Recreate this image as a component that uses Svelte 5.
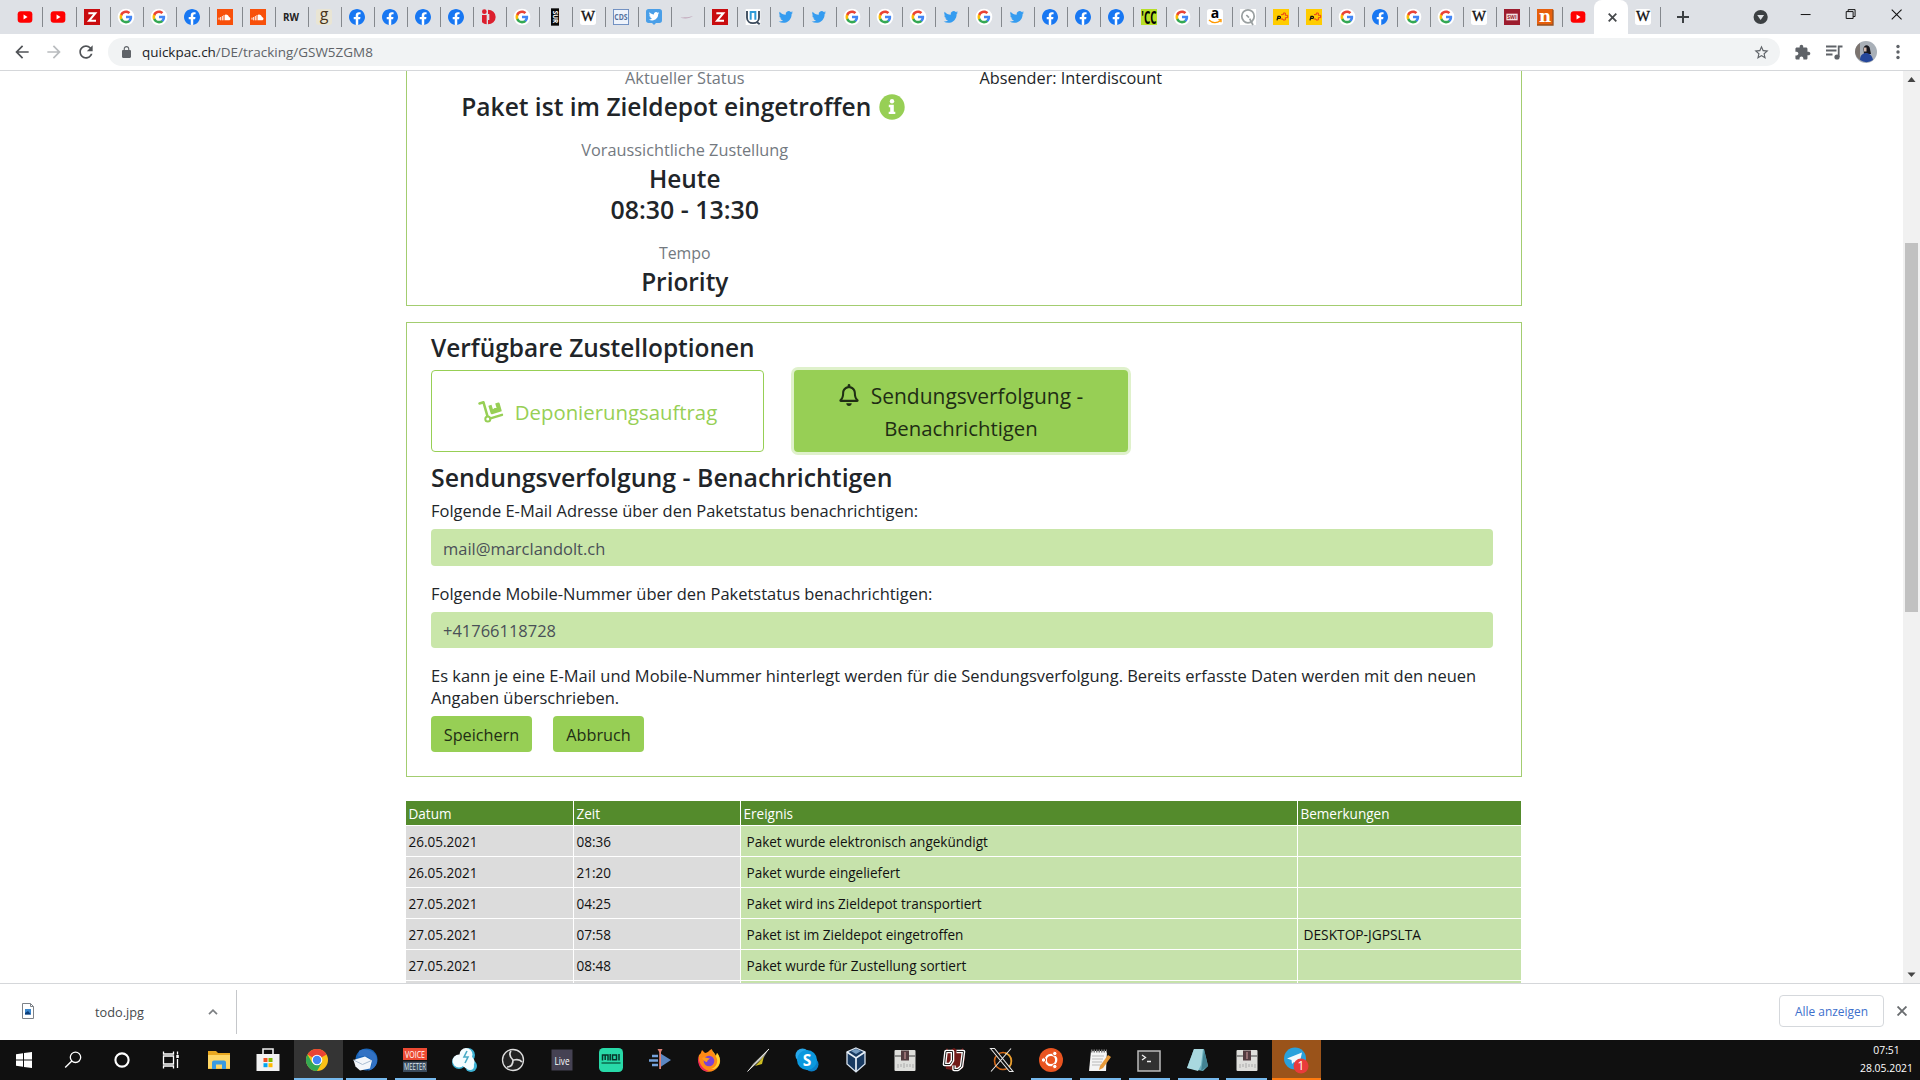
<script>
  const tabs = 'yt yt Z G G f sc sc RW g f f f f iD G mus W CDS twb line Z U tw tw G G G tw G tw f f f CC G a Q post post G f G G W SWI n yt'.split(' ');
  const tasks = 'win search cortana view explorer store chrome bird voice cloud obs live midi arrow firefox quill skype vbox fader dj x ubuntu notepad term notes fader telegram'.split(' ');
  const running = [7, 8, 21, 22, 23, 24, 25];
  const events = [
    ['26.05.2021', '08:36', 'Paket wurde elektronisch angekündigt', ''],
    ['26.05.2021', '21:20', 'Paket wurde eingeliefert', ''],
    ['27.05.2021', '04:25', 'Paket wird ins Zieldepot transportiert', ''],
    ['27.05.2021', '07:58', 'Paket ist im Zieldepot eingetroffen', 'DESKTOP-JGPSLTA'],
    ['27.05.2021', '08:48', 'Paket wurde für Zustellung sortiert', ''],
    ['', '', '', '']
  ];
  const bird = 'M23.953 4.57a10 10 0 01-2.825.775 4.958 4.958 0 002.163-2.723c-.951.555-2.005.959-3.127 1.184a4.92 4.92 0 00-8.384 4.482C7.69 8.095 4.067 6.13 1.64 3.162a4.822 4.822 0 00-.666 2.475c0 1.71.87 3.213 2.188 4.096a4.904 4.904 0 01-2.228-.616v.06a4.923 4.923 0 003.946 4.827 4.996 4.996 0 01-2.212.085 4.936 4.936 0 004.604 3.417 9.867 9.867 0 01-6.102 2.105c-.39 0-.779-.023-1.17-.067a13.995 13.995 0 007.557 2.209c9.053 0 13.998-7.496 13.998-13.985 0-.21 0-.42-.015-.63A9.935 9.935 0 0024 4.59z';
</script>

{#snippet favicon(k)}
  <svg class="fav" viewBox="0 0 24 24">
    {#if k === 'yt'}
      <rect x="1" y="3.5" width="22" height="17" rx="4.5" fill="#f00" /><path d="M9.8 8.3v7.4l6-3.7z" fill="#fff" />
    {:else if k === 'G'}
      <circle cx="12" cy="12" r="12.5" fill="#fff" />
      <g transform="translate(1.4 1.4) scale(.88)">
        <path fill="#4285F4" d="M22.56 12.25c0-.78-.07-1.53-.2-2.25H12v4.26h5.92c-.26 1.37-1.04 2.53-2.21 3.31v2.77h3.57c2.08-1.92 3.28-4.74 3.28-8.09z" />
        <path fill="#34A853" d="M12 23c2.97 0 5.46-.98 7.28-2.66l-3.57-2.77c-.98.66-2.23 1.06-3.71 1.06-2.86 0-5.29-1.93-6.16-4.53H2.18v2.84C3.99 20.53 7.7 23 12 23z" />
        <path fill="#FBBC05" d="M5.84 14.09c-.22-.66-.35-1.36-.35-2.09s.13-1.43.35-2.09V7.07H2.18C1.43 8.55 1 10.22 1 12s.43 3.45 1.18 4.93l2.85-2.22.81-.62z" />
        <path fill="#EA4335" d="M12 5.38c1.62 0 3.06.56 4.21 1.64l3.15-3.15C17.45 2.09 14.97 1 12 1 7.7 1 3.99 3.47 2.18 7.07l3.66 2.84c.87-2.6 3.3-4.53 6.16-4.53z" />
      </g>
    {:else if k === 'f'}
      <circle cx="12" cy="12" r="11.5" fill="#fff" />
      <path fill="#1877f2" d="M24 12.073c0-6.627-5.373-12-12-12s-12 5.373-12 12c0 5.99 4.388 10.954 10.125 11.854v-8.385H7.078v-3.47h3.047V9.43c0-3.007 1.792-4.669 4.533-4.669 1.312 0 2.686.235 2.686.235v2.953H15.83c-1.491 0-1.956.925-1.956 1.874v2.25h3.328l-.532 3.47h-2.796v8.385C19.612 23.027 24 18.062 24 12.073z" />
    {:else if k === 'tw'}
      <g transform="translate(1 1.2) scale(.9)"><path fill="#359cf0" d={bird} /></g>
    {:else if k === 'twb'}
      <path d="M4 0h16a4 4 0 0 1 4 4v13a4 4 0 0 1-4 4h-5l-3 3-3-3H4a4 4 0 0 1-4-4V4a4 4 0 0 1 4-4z" fill="#4a9fe8" /><g transform="translate(4.3 3) scale(.65)"><path fill="#fff" d={bird} /></g>
    {:else if k === 'Z'}
      <rect width="24" height="24" fill="#c90c0f" /><path d="M6.5 6.2h10.500L7.500 17.800h10.500" fill="none" stroke="#fff" stroke-width="3" />
    {:else if k === 'sc'}
      <rect width="24" height="24" fill="#f8500a" /><path d="M3 13v3M5.500 12v5M8 10.500v6.500M10.500 9v8" stroke="#fff" stroke-width="1.400" /><path d="M12 17V8.500a4.500 4.500 0 0 1 6 3.600 2.600 2.600 0 0 1 .8 4.900z" fill="#fff" />
    {:else if k === 'RW'}
      <text x="12" y="17.500" font-size="16" font-weight="700" textLength="24" lengthAdjust="spacingAndGlyphs" text-anchor="middle" fill="#222">RW</text>
    {:else if k === 'g'}
      <rect width="24" height="24" rx="4" fill="#e9e5d4" /><text x="12" y="17" font-size="24" text-anchor="middle" fill="#49351c">g</text>
    {:else if k === 'iD'}
      <circle cx="5" cy="4" r="3.500" fill="#dc1f2e" /><path d="M1.500 9h7v14a11 11 0 0 1-7-3z" fill="#dc1f2e" /><path d="M10.500 1a11.500 11 0 0 1 0 22v-6.500h2v-9h-2z" fill="#dc1f2e" />
    {:else if k === 'mus'}
      <rect x="6" y="-1" width="12" height="26" fill="#080808" /><text transform="translate(9 12) rotate(90)" font-size="9.500" font-weight="700" text-anchor="middle" fill="#fff">SUR</text>
    {:else if k === 'W'}
      <rect width="24" height="24" rx="4" fill="#fff" /><text class="serif" x="12" y="18.500" font-size="21" textLength="21" lengthAdjust="spacingAndGlyphs" text-anchor="middle" fill="#111" stroke="#111" stroke-width=".5">W</text>
    {:else if k === 'CDS'}
      <rect x=".7" y=".7" width="22.600" height="22.600" fill="#eef3fb" stroke="#6b8cc0" stroke-width="1.400" /><text x="12" y="17" font-size="13" font-weight="700" textLength="20" lengthAdjust="spacingAndGlyphs" text-anchor="middle" fill="#55719f">CDS</text>
    {:else if k === 'line'}
      <path d="M2 13c6-1 10 .2 19-2.500-5 4-12 4.500-19 2.500z" fill="#c3aabd" />
    {:else if k === 'U'}
      <rect x="1" width="22" height="24" fill="#fff" /><path d="M3 3v10c0 11 18 11 18 0V3" fill="none" stroke="#3b4a5c" stroke-width="2.800" /><path d="M8.500 16V4.500h7V16" fill="none" stroke="#2f9bd8" stroke-width="3" /><path d="M17 19l5 4" stroke="#3b4a5c" stroke-width="3" />
    {:else if k === 'CC'}
      <rect width="24" height="24" fill="#b7df26" /><text x="12" y="22" font-size="27" font-weight="700" textLength="23" lengthAdjust="spacingAndGlyphs" text-anchor="middle">'CC</text>
    {:else if k === 'a'}
      <rect width="24" height="24" rx="4" fill="#fff" /><text x="12" y="14" font-size="21" font-weight="700" text-anchor="middle">a</text><path d="M3 16.500c5 5 12 5 17 1M17 16h4v4" fill="none" stroke="#f90" stroke-width="2" />
    {:else if k === 'Q'}
      <rect width="24" height="24" fill="#fff" /><ellipse cx="12" cy="11" rx="9.300" ry="9.800" fill="none" stroke="#9aa0a1" stroke-width="2.600" /><path d="M9.500 9l4 4M14.500 14.500l5 9.500" stroke="#9aa0a1" stroke-width="2.600" />
    {:else if k === 'post'}
      <rect width="24" height="24" fill="#fc0" /><path d="M6 17l1.500-6h2.500a1.600 1.600 0 0 1-.6 3.200H7.500" fill="none" stroke="#111" stroke-width="1.800" /><path d="M12 8.500h3.500V6h3v3.500H22v3.500h-3.500v3.500H15V15h-3.500" fill="none" stroke="#e8401c" stroke-width="1.500" />
    {:else if k === 'SWI'}
      <rect width="24" height="24" fill="#9d1c2e" /><rect x="3.500" y="7" width="17" height="10" fill="#f2dfe1" /><text x="12" y="15.500" font-size="9" font-weight="700" textLength="14" lengthAdjust="spacingAndGlyphs" text-anchor="middle" fill="#9d1c2e">SWI</text>
    {:else if k === 'n'}
      <rect width="24" height="24" fill="#e65f0c" /><path d="M0 24h24V1" fill="none" stroke="#99501e" stroke-width="2" /><text class="slab" x="12" y="19" font-size="25" font-weight="700" text-anchor="middle" fill="#fff">n</text>
    {/if}
  </svg>
{/snippet}

{#snippet task(k)}
  <svg class="ticon" viewBox="0 0 28 28">
    {#if k === 'win'}
      <path d="M6 8.200l7-1v6.300H6zM14 7.100l8-1.100v7.500h-8zM6 14.500h7v6.300l-7-1zM14 14.500h8V22l-8-1.100z" fill="#fff" />
    {:else if k === 'search'}
      <circle cx="16.500" cy="11.300" r="5.200" fill="none" stroke="#fff" stroke-width="1.300" /><path d="M12.800 15l-6.600 6.600" stroke="#fff" stroke-width="1.400" />
    {:else if k === 'cortana'}
      <circle cx="14" cy="14" r="6.600" fill="none" stroke="#fff" stroke-width="2.100" />
    {:else if k === 'view'}
      <path d="M6.500 10h10v8h-10zM6.500 5.500V8h10V5.500M6.500 22.500V20h10v2.500M20.500 5.500v3M20.500 13v9" fill="none" stroke="#fff" stroke-width="1.300" /><rect x="19.300" y="9" width="2.500" height="3" fill="#fff" />
    {:else if k === 'explorer'}
      <path d="M3 5h8l2 2h12v16H3z" fill="#e9a820" /><path d="M3 9h22v13.500H3z" fill="#ffd766" /><path d="M7 23v-6.500a2 2 0 0 1 2-2h10a2 2 0 0 1 2 2V23h-4v-4.500h-6V23z" fill="#3a9be0" />
    {:else if k === 'store'}
      <path d="M9 8V3h10v5" fill="none" stroke="#eee" stroke-width="1.600" /><path d="M2.500 8h23v17h-23z" fill="#f2f2f2" /><path d="M9.500 12h4v4h-4z" fill="#f25022" /><path d="M14.500 12h4v4h-4z" fill="#7fba00" /><path d="M9.500 17.200h4v4h-4z" fill="#00a4ef" /><path d="M14.500 17.200h4v4h-4z" fill="#ffb900" />
    {:else if k === 'chrome'}
      <circle cx="14" cy="14" r="11" fill="#fbc116" /><path d="M14 14L4.470 8.500A11 11 0 0 1 23.530 8.500z" fill="#ea4335" /><path d="M4.470 8.500A11 11 0 0 0 14 25l4.800-8.200H9.200z" fill="#34a853" /><circle cx="14" cy="14" r="5.300" fill="#fff" /><circle cx="14" cy="14" r="4.200" fill="#4285f4" />
    {:else if k === 'bird'}
      <circle cx="14.500" cy="13.500" r="11" fill="#1763b6" /><path d="M7 5c8-4 18 1 18 9 0 6-4 10-9 10.500 4-3 5-7 3-11-3-4-8-4-13-3z" fill="#3272c4" /><path d="M1.500 14l11.500-3.500 7 4-2 8-10 2-4.500-4z" fill="#f3f6fa" /><path d="M1.500 14l9 4.500 9-4" fill="none" stroke="#a9bdd2" />
    {:else if k === 'voice'}
      <path d="M2 2h24v12H2z" fill="#ed4a33" /><path d="M2 15.500h24V26H2z" fill="#3a4a5c" /><text x="14" y="11.500" font-size="9.500" textLength="20" lengthAdjust="spacingAndGlyphs" text-anchor="middle" fill="#fff">VOICE</text><text x="14" y="24" font-size="9" textLength="22" lengthAdjust="spacingAndGlyphs" text-anchor="middle" fill="#dfe6ed">MEETER</text>
    {:else if k === 'cloud'}
      <g fill="#3db2d4"><circle cx="18" cy="9" r="7" /><circle cx="9" cy="16" r="7" /><circle cx="21" cy="20" r="6" /></g><g fill="#f4fcff"><circle cx="16" cy="8.500" r="6.500" /><circle cx="9" cy="15" r="6.500" /><circle cx="18" cy="16" r="6.500" /><circle cx="20" cy="20" r="4" /></g><path d="M17 5l-3 6h4l-3 6" fill="none" stroke="#47aac6" stroke-width="1.600" />
    {:else if k === 'obs'}
      <circle cx="14" cy="14" r="10.500" fill="#222" stroke="#ddd" stroke-width="1.300" /><path d="M12 5c-3 4 0 7 2 9M23 16c-3-4-6-2-9-2M8 21c5 0 6-3 6-7" fill="none" stroke="#ddd" stroke-width="1.700" />
    {:else if k === 'live'}
      <path d="M3.500 3.500h21v21h-21z" fill="#454253" /><text x="14" y="18.500" font-size="11" textLength="15" lengthAdjust="spacingAndGlyphs" text-anchor="middle" fill="#fff">Live</text>
    {:else if k === 'midi'}
      <rect x="2" y="2" width="24" height="24" rx="4.500" fill="#28d9a8" /><path d="M5.500 14.500V9h5.500v5.500M8.200 9v5M13.200 8v6.500M15.500 9h4v4.700h-4zM22 8v6.500" fill="none" stroke="#07352a" stroke-width="1.500" /><path d="M4.500 17h19" stroke="#128563" stroke-width="2" />
    {:else if k === 'arrow'}
      <path d="M14.500 7.500L25 14l-10.500 7z" fill="#5c87c2" /><path d="M6 10h6M3 14.500h9M6 19h6" stroke="#75a2dc" stroke-width="2.300" /><path d="M11.500 3h5L15 6v17h-1.800V6z" fill="#dd8177" />
    {:else if k === 'firefox'}
      <path d="M4 9c2-1 2-3 3-5l3 3c3 0 4-3 7-4 0 3 2 3 4 7l1-3c4 5 4 10 1 14-5 7-15 6-18-1-2-4-2-8-1-11z" fill="#ff8a16" /><path d="M17 3c0 4 3 4 5 10 1 5-2 9-6 10 8 1 12-9 6-16l-1 3c-2-4-4-5-4-7z" fill="#ffd42f" /><path d="M3 10c1 5 3 13 11 15-6 2-12-4-11-15z" fill="#f1275a" /><circle cx="14" cy="15" r="5.300" fill="#7b42d5" /><path d="M7 12c3-2 5 1 8 0-1 2-3 2-3 4-2 0-4-2-5-4z" fill="#ff9b20" />
    {:else if k === 'quill'}
      <path d="M4 25l5-7L25 2.500 20 11l-9 8z" fill="#a5a59a" /><path d="M11 20l4-4 5-6-2 8z" fill="#cdbd22" /><path d="M3.500 25.500L25 3" stroke="#eee" />
    {:else if k === 'skype'}
      <circle cx="9.500" cy="9.500" r="7" fill="#28a8ea" /><circle cx="18.500" cy="18.500" r="7" fill="#0a7fc8" /><circle cx="14" cy="14" r="10" fill="#0b98de" /><text x="14" y="19.500" font-size="15.500" font-weight="700" text-anchor="middle" fill="#fff">S</text>
    {:else if k === 'vbox'}
      <path d="M14 2l9 4v12l-9 8-9-8V6z" fill="#183a61" stroke="#d9e4f0" stroke-width="1.300" /><path d="M5 6l9 6 9-6M14 12v13" fill="none" stroke="#e9f1f8" stroke-width="1.700" /><path d="M9 5l5-2 5 2-5 3z" fill="#779dc1" />
    {:else if k === 'fader'}
      <rect x="3.500" y="4" width="21" height="21" rx="1" fill="#dededb" /><path d="M3.500 10h21" stroke="#777" stroke-width="1.500" /><rect x="10" y="4.500" width="8" height="10" fill="#523b40" /><path d="M13 6h2v7h-2z" fill="#926c70" /><path d="M7 18v4M10 18v3M13 17v5M16 18v3M19 18v3M22 18v4" stroke="#aaa" />
    {:else if k === 'dj'}
      <path d="M4 7l3-5 2 3 5-3 5 3 4-3 2 9-2 11-6 3-11-2z" fill="#711a18" /><g fill="none" stroke-linejoin="round"><path d="M6 5.500h6.500v9L10 18.500H4.500zM16.500 5.500h7l-2 15-3.500 3h-4v-4" stroke="#fff" stroke-width="3.600" /><path d="M6 5.500h6.500v9L10 18.500H4.500zM16.500 5.500h7l-2 15-3.500 3h-4v-4" stroke="#222" stroke-width="1" /></g>
    {:else if k === 'x'}
      <circle cx="15" cy="15" r="8.500" fill="none" stroke="#d36818" stroke-width="1.600" /><path d="M17 7a8.500 8.500 0 0 1 4 14" fill="none" stroke="#e3a332" stroke-width="1.500" /><path d="M2.500 2.500l19 23h3.500L6.500 2.500zM23 2.500L3 25.500" fill="#111" stroke="#e6e6e6" stroke-width="1.100" />
    {:else if k === 'ubuntu'}
      <circle cx="14" cy="14" r="12" fill="#e95420" /><circle cx="14" cy="14" r="5.200" fill="none" stroke="#fff" stroke-width="2.300" /><g fill="#fff" stroke="#e95420"><circle cx="6.500" cy="14" r="2.200" /><circle cx="17.800" cy="7.500" r="2.200" /><circle cx="17.800" cy="20.500" r="2.200" /></g>
    {:else if k === 'notepad'}
      <path d="M5 5h16l-1 20H3z" fill="#f4f4f4" /><path d="M5 5h16" stroke="#777" stroke-width="3" stroke-dasharray="1.500 1" /><path d="M6 10h12M6 13h11M6 16h10M6 19h9" stroke="#b9b9b9" /><path d="M22 9l3 2-8 11-4 2 1-4z" fill="#e79a39" />
    {:else if k === 'term'}
      <rect x="3" y="5" width="22" height="20" fill="#303030" stroke="#bbb" stroke-width="1.500" /><path d="M7 9l3.500 2.500L7 14M12 15.500h4" fill="none" stroke="#eee" stroke-width="1.300" />
    {:else if k === 'notes'}
      <path d="M10 3h10l4 17-5 5-16-3z" fill="#68aebc" /><path d="M10 3h9l-2 16-3 6-11-3z" fill="#a9d8df" /><path d="M20 4l4 16-7 5 1-6z" fill="#438393" />
    {:else if k === 'telegram'}
      <circle cx="13" cy="12.500" r="11" fill="#2aa1dc" /><path d="M5 12.500L20 6.500 17 20l-5-4-2 2-.5-4z" fill="#f3f9fd" /><circle cx="19" cy="20" r="7.500" fill="#e93b3b" /><text x="19" y="24.300" font-size="12" text-anchor="middle" fill="#fff">1</text>
    {/if}
  </svg>
{/snippet}

<div class="screen">
  <div class="tabstrip">
    {#each tabs as k, i}
      <div class="tab" class:wide={i === 1 || i === 2} class:last={i === tabs.length - 1}>{@render favicon(k)}</div>
    {/each}
    <div class="tab active"><svg class="c9" viewBox="0 0 9 9"><path d="M.7.700l7.600 7.600M8.300.700L.7 8.300" stroke="#46494c" stroke-width="1.800" /></svg></div>
    <div class="tab">{@render favicon('W')}</div>
    <div class="newtab"><svg viewBox="0 0 14 14"><path d="M7 1v12M1 7h12" stroke="#3c4043" stroke-width="2" /></svg></div>
    <div class="wctl">
      <svg viewBox="0 0 46 34"><circle cx="23" cy="17" r="7.200" fill="#3c4043" /><path d="M19.500 15h7L23 20z" fill="#dee1e6" /></svg>
      <svg viewBox="0 0 46 34"><path d="M18 14.500h10" stroke="#111" /></svg>
      <svg viewBox="0 0 46 34"><path d="M18.500 11.500h7v7h-7zM20.500 11.500v-2h7v7h-2" fill="none" stroke="#111" /></svg>
      <svg viewBox="0 0 46 34"><path d="M18 9.500l10 10M28 9.500l-10 10" stroke="#111" stroke-width="1.100" /></svg>
    </div>
  </div>

  <div class="toolbar">
    <div class="slot"><svg viewBox="0 0 24 24" fill="#505357"><path d="M20 11H7.830l5.590-5.590L12 4l-8 8 8 8 1.410-1.410L7.830 13H20v-2z" /></svg></div>
    <div class="slot"><svg viewBox="0 0 24 24" fill="#b9bcbf"><path d="M4 11h12.170l-5.590-5.590L12 4l8 8-8 8-1.410-1.410L16.170 13H4v-2z" /></svg></div>
    <div class="slot"><svg viewBox="0 0 24 24" fill="#505357"><path d="M17.650 6.350C16.200 4.900 14.210 4 12 4c-4.420 0-7.990 3.580-7.990 8s3.570 8 7.990 8c3.730 0 6.840-2.550 7.730-6h-2.080c-.82 2.330-3.040 4-5.650 4-3.310 0-6-2.690-6-6s2.690-6 6-6c1.660 0 3.140.69 4.220 1.780L13 11h7V4l-2.350 2.350z" /></svg></div>
    <div class="omni">
      <svg class="lock" viewBox="4 1 16 21" fill="#5f6368"><path d="M18 8h-1V6c0-2.760-2.240-5-5-5S7 3.240 7 6v2H6c-1.100 0-2 .9-2 2v10c0 1.100.9 2 2 2h12c1.100 0 2-.9 2-2V10c0-1.100-.9-2-2-2zm-3 0H9V6c0-1.700 1.300-3 3-3s3 1.300 3 3z" /></svg>
      <span class="url"><b>quickpac.ch</b>/DE/tracking/GSW5ZGM8</span>
      <svg class="star" viewBox="0 0 24 24" fill="#5f6368"><path d="M22 9.240l-7.190-.62L12 2 9.190 8.630 2 9.240l5.460 4.730L5.820 21 12 17.270 18.180 21l-1.630-7.030L22 9.240zM12 15.400l-3.760 2.270 1-4.280-3.320-2.880 4.380-.38L12 6.100l1.710 4.040 4.380.38-3.320 2.880 1 4.280L12 15.400z" /></svg>
    </div>
    <div class="slot"><svg class="puz" viewBox="0 0 24 24" fill="#5f6368"><path d="M20.500 11H19V7c0-1.100-.9-2-2-2h-4V3.500C13 2.120 11.880 1 10.500 1S8 2.120 8 3.500V5H4c-1.100 0-1.990.9-1.990 2v3.800H3.500c1.490 0 2.700 1.210 2.700 2.700s-1.210 2.700-2.700 2.700H2V20c0 1.100.9 2 2 2h3.800v-1.500c0-1.490 1.210-2.700 2.700-2.700 1.490 0 2.700 1.210 2.700 2.700V22H17c1.100 0 2-.9 2-2v-4h1.500c1.380 0 2.500-1.120 2.500-2.500S21.880 11 20.500 11z" /></svg></div>
    <div class="slot"><svg viewBox="0 0 20 20"><path d="M2 4.500h10.500M2 8.500h10.500M2 12.500h6.500M14.700 15V4.500H18.500" fill="none" stroke="#5f6368" stroke-width="1.800" /><circle cx="13" cy="15" r="2.600" fill="#5f6368" /></svg></div>
    <div class="slot"><svg class="avatar" viewBox="0 0 22 22"><circle cx="11" cy="11" r="11" fill="#a9b0b8" /><path d="M0 11a11 11 0 0 1 5-9v17a11 11 0 0 1-5-8z" fill="#7c746f" /><path d="M8.500 8c0-5 6-5 6.500 0l1 5H9z" fill="#17181f" /><path d="M5 19c0-5 3-7 6-7s6 2 7 7a11 11 0 0 1-13 0z" fill="#25479a" /><path d="M9 6.500h2.500v4H9z" fill="#d4b9ae" /></svg></div>
    <div class="slot"><svg viewBox="0 0 20 20" fill="#5f6368"><circle cx="10" cy="4.500" r="1.700" /><circle cx="10" cy="10" r="1.700" /><circle cx="10" cy="15.500" r="1.700" /></svg></div>
  </div>

  <div class="viewport">
    <main>
      <section class="card status">
        <div class="col">
          <div class="lbl">Aktueller Status</div>
          <div class="val headline"><span>Paket ist im Zieldepot eingetroffen</span><svg class="info" viewBox="0 0 26 26"><circle cx="13" cy="13" r="12.700" fill="#97cf55" /><circle cx="13" cy="7.300" r="2.200" fill="#fff" /><path d="M9.800 10.800h5v6.900h1.500v2.400H9.700v-2.400h1.500v-4.500H9.800z" fill="#fff" /></svg></div>
          <div class="lbl">Voraussichtliche Zustellung</div>
          <div class="val">Heute<br /><span class="hours">08:30 - 13:30</span></div>
          <div class="lbl tempo">Tempo</div>
          <div class="val">Priority</div>
        </div>
        <div class="sender">Absender: Interdiscount</div>
      </section>

      <section class="card options">
        <h3>Verfügbare Zustelloptionen</h3>
        <div class="choices">
          <button class="choice outline">
            <svg class="dolly" viewBox="0 0 26 22"><path d="M1.500 2.500l4-1.200 4 14" fill="none" stroke="#97cf55" stroke-width="2.500" stroke-linecap="round" stroke-linejoin="round" /><circle cx="9.800" cy="18" r="2.500" fill="#fff" stroke="#97cf55" stroke-width="2" /><path d="M12.500 17.300l11.500-3.500" stroke="#97cf55" stroke-width="2.400" stroke-linecap="round" /><path d="M10.500 4.700l3-1 1.400 4.500 1.700-1.300 2 .2-1.400-4.600 3-1c.7-.2 1.200.1 1.400.7l2 7c.2.700-.1 1.200-.7 1.400l-8.800 2.600c-.7.200-1.200-.1-1.400-.7l-2-6.400c-.2-.7-.3-1.200-.2-1.400z" fill="#97cf55" /></svg>
            <span class="depo">Deponierungsauftrag</span>
          </button>
          <button class="choice solid">
            <span class="first"><svg class="bell" viewBox="0 0 448 512" fill="#1f2e14"><path d="M224 512c35.320 0 63.970-28.650 63.970-64H160.030c0 35.350 28.650 64 63.970 64zm215.390-149.710c-19.320-20.760-55.470-51.990-55.470-154.290 0-77.700-54.480-139.900-127.940-155.160V32c0-17.670-14.320-32-31.980-32s-31.980 14.330-31.980 32v20.840C118.560 68.100 64.080 130.300 64.080 208c0 102.300-36.150 133.530-55.470 154.290-6 6.450-8.660 14.160-8.610 21.710.11 16.400 12.980 32 32.100 32h383.800c19.120 0 32-15.600 32.100-32 .05-7.550-2.610-15.270-8.610-21.710zM67.530 368c21.220-27.970 44.420-74.330 44.530-159.420 0-.2-.06-.38-.06-.58 0-61.860 50.140-112 112-112s112 50.140 112 112c0 .2-.06.38-.06.58.11 85.100 23.310 131.460 44.530 159.420H67.530z" /></svg><span class="send">Sendungsverfolgung -</span></span>
            <span>Benachrichtigen</span>
          </button>
        </div>
        <h3 class="second">Sendungsverfolgung - Benachrichtigen</h3>
        <label class="mail-l" for="mail">Folgende E-Mail Adresse über den Paketstatus benachrichtigen:</label>
        <div class="field mail" id="mail">mail@marclandolt.ch</div>
        <label class="tel-l" for="tel">Folgende Mobile-Nummer über den Paketstatus benachrichtigen:</label>
        <div class="field" id="tel">+41766118728</div>
        <p>Es kann je eine E-Mail und Mobile-Nummer hinterlegt werden für die Sendungsverfolgung. Bereits erfasste Daten werden mit den neuen<br />Angaben überschrieben.</p>
        <div class="actions"><button class="save">Speichern</button><button class="cancel">Abbruch</button></div>
      </section>

      <div class="grid">
        <div class="row head"><span>Datum</span><span>Zeit</span><span>Ereignis</span><span>Bemerkungen</span></div>
        {#each events as e}
          <div class="row"><span>{e[0]}</span><span>{e[1]}</span><span class="ev">{e[2]}</span><span class="ev rem">{e[3]}</span></div>
        {/each}
      </div>
    </main>
    <div class="scrollbar">
      <svg viewBox="0 0 17 17"><path d="M4.500 11h8l-4-5z" fill="#444" /></svg>
      <div class="thumb"></div>
      <svg class="down" viewBox="0 0 17 17"><path d="M4.500 6.500h8l-4 4.500z" fill="#444" /></svg>
    </div>
  </div>

  <div class="shelf">
    <div class="dl">
      <svg class="file" viewBox="0 0 12 16"><path d="M.5.500h8l3 3v12H.5z" fill="#fff" stroke="#7d8288" /><path d="M8.500.500v3h3" fill="none" stroke="#7d8288" /><path d="M3 6h6v5.500H3z" fill="#3a86cc" /><path d="M3 11.500V10l3-2 3 3.500z" fill="#0c3d78" /></svg>
      <span class="name">todo.jpg</span>
      <svg class="chev" viewBox="0 0 10 6"><path d="M1 5.200l4-4 4 4" fill="none" stroke="#7c7f82" stroke-width="1.700" /></svg>
    </div>
    <button class="all">Alle anzeigen</button>
    <svg class="c9 close" viewBox="0 0 9 9"><path d="M.5.500l8 8M8.500.500l-8 8" stroke="#6a6d70" stroke-width="1.700" /></svg>
  </div>

  <div class="taskbar">
    {#each tasks as k, i}
      <div class="task" class:run={running.includes(i)} class:current={i === 6} class:alert={i === 26}>{@render task(k)}</div>
    {/each}
    <div class="clock">07:51<br />28.05.2021</div>
  </div>
</div>

<style>
  :global(body) { margin: 0; overflow: hidden; }
  .screen { width: 1920px; height: 1080px; display: flex; flex-direction: column; background: #fff; color: #212529; font-family: "Open Sans", "Noto Sans", sans-serif; font-size: 16.480px; line-height: 22px; overflow: hidden; }
  .screen * { box-sizing: border-box; }
  svg { display: block; flex: none; }
  .serif { font-family: "Liberation Serif", serif; }
  .slab { font-family: "DejaVu Serif", serif; }
  button { font: inherit; border: 0; padding: 0; white-space: nowrap; }

  .tabstrip { height: 34px; flex: none; background: #dee1e6; display: flex; align-items: center; padding-left: 10px; }
  .tab { width: 33px; height: 20px; flex: none; display: flex; align-items: center; justify-content: center; padding-right: 3px; border-right: 1px solid #84888d; }
  .tab.wide { width: 34px; }
  .tab.last { border-color: transparent; }
  .fav { width: 16px; height: 16px; overflow: visible; }
  .tab.active { width: 34px; height: 34px; background: #fff; border: 0; border-radius: 8px 8px 0 0; padding: 0 0 0 3px; margin-left: -2px; }
  .c9 { width: 9px; height: 9px; }
  .newtab { margin-left: 15px; width: 14px; }
  .newtab svg { width: 14px; height: 14px; }
  .wctl { display: flex; margin-left: auto; margin-right: 1px; }
  .wctl svg { width: 45.300px; height: 34px; }

  .toolbar { height: 37px; flex: none; display: flex; align-items: center; padding: 0 6px; border-bottom: 1px solid #d5d7da; background: #fff; }
  .slot { width: 32px; display: flex; justify-content: center; }
  .slot svg { width: 20px; height: 20px; }
  .slot svg.puz { width: 17px; height: 17px; }
  .slot svg.avatar { width: 22px; height: 22px; }
  .omni { flex: 1; height: 28px; margin: 0 6px; border-radius: 14px; background: #f1f3f4; display: flex; align-items: center; padding: 0 10px 0 13.500px; }
  .lock { width: 9px; height: 12px; }
  .url { margin-left: 11.500px; font-size: 13.480px; color: #5f6368; }
  .url b { font-weight: 400; color: #202124; }
  .star { width: 17px; height: 17px; margin-left: auto; }

  .viewport { height: 912px; flex: none; overflow: hidden; display: flex; }
  main { width: 1116px; margin-left: 406px; flex: none; }
  .card { border: 1px solid #a3cd70; }
  .status { display: flex; margin-top: -4px; border-top: 0; padding-bottom: 8px; }
  .col { width: 555.500px; text-align: center; }
  .lbl { color: #73797f; font-size: 16.300px; height: 22px; margin-top: 17px; }
  .lbl:first-child { margin-top: 0; }
  .tempo { font-size: 15.900px; }
  .val { font-size: 24.400px; font-weight: 600; line-height: 31px; margin-top: 2px; }
  .headline { display: flex; align-items: center; justify-content: center; font-size: 24.550px; padding-right: 3px; }
  .hours { font-size: 24.900px; line-height: 1; }
  .info { width: 26px; height: 26px; margin-left: 8px; }
  .sender { margin-left: 17px; font-size: 16.280px; }
  .options { margin-top: 16px; padding: 8px 28px 24px 24px; }
  h3 { margin: 0; font-size: 24.440px; font-weight: 600; line-height: 34px; height: 32px; }
  h3.second { margin-top: 8px; font-size: 24.850px; }
  .choices { display: flex; gap: 30px; margin-top: 7px; }
  .choice { height: 82px; border-radius: 4px; font-size: 20.350px; line-height: 32px; display: flex; align-items: center; justify-content: center; padding-top: 2px; }
  .outline { width: 333px; background: #fff; border: 1px solid #97cf55; color: #97cf55; }
  .dolly { width: 26px; height: 22px; margin-right: 11px; }
  .solid { width: 334px; flex-direction: column; background: #97cf55; color: #1f2e14; box-shadow: 0 0 0 3px #dff1cb; }
  .first { display: flex; align-items: center; }
  .send { font-size: 20.980px; }
  .bell { width: 20px; height: 22px; margin-right: 12px; margin-bottom: 2px; }
  label { display: block; height: 22px; }
  .mail-l { margin-top: 8px; }
  .tel-l { margin-top: 17px; }
  .field { margin-top: 7px; height: 36px; border-radius: 4px; background: #c9e6a9; color: #495057; padding-left: 12px; line-height: 38px; }
  .field.mail { height: 37px; line-height: 40px; }
  p { margin: 17px 0 0; white-space: nowrap; }
  .actions { display: flex; gap: 21px; margin-top: 7px; }
  .actions button { height: 36px; border-radius: 4px; background: #97cf55; color: #1f2e14; font-size: 16.250px; padding-top: 2px; }
  .save { width: 101px; }
  .cancel { width: 91px; }

  .grid { margin-top: 24px; font-size: 13.540px; color: #111; }
  .row { display: grid; grid-template-columns: 167px 166px 556px 223px; grid-auto-rows: 30px; column-gap: 1px; height: 30px; margin-bottom: 1px; line-height: 32px; }
  .row span { background: #dcdcdc; padding-left: 2.500px; }
  .row .ev { background: #c6e2ab; padding-left: 5.500px; }
  .row .rem { font-size: 13.750px; }
  .row.head { grid-auto-rows: 24px; height: 24px; line-height: 26px; color: #fff; }
  .row.head span { background: #548b2c; }

  .scrollbar { margin-left: auto; width: 17px; height: 912px; background: #f1f1f1; display: flex; flex-direction: column; }
  .scrollbar svg { width: 17px; height: 17px; }
  .thumb { width: 13px; height: 369px; margin: 155px 2px 0; background: #c1c1c1; }
  .down { margin-top: auto; }

  .shelf { height: 57px; flex: none; border-top: 1px solid #d5d7da; display: flex; align-items: center; background: #fff; }
  .dl { width: 237px; height: 44px; border-right: 1px solid #c5c7ca; display: flex; align-items: center; padding-left: 22px; }
  .file { width: 12px; height: 16px; margin-bottom: 2px; }
  .name { margin-left: 61px; font-size: 12.760px; color: #46494d; }
  .chev { width: 10px; height: 6px; margin-left: auto; margin-right: 18px; }
  .all { margin-left: auto; width: 105px; height: 32px; margin-bottom: 2px; background: #fff; border: 1px solid #d5d8dc; border-radius: 4px; color: #3d6fcc; font-size: 11.910px; }
  .close { margin: 0 13px 2px; width: 10px; height: 10px; }

  .taskbar { height: 40px; flex: none; background: #101010; display: flex; }
  .task { width: 48.950px; height: 40px; flex: none; display: flex; align-items: center; justify-content: center; padding-right: 1.500px; }
  .ticon { width: 28px; height: 28px; overflow: visible; }
  .run { background: linear-gradient(#76b9ed, #76b9ed) 3px 100% / 41px 2px no-repeat; }
  .current { background: #343434; border-bottom: 2px solid #76b9ed; padding-top: 2px; }
  .alert { background: #9a531a; border-bottom: 2px solid #ff7b0f; padding-top: 2px; }
  .clock { margin-left: auto; margin-right: 7px; width: 53px; color: #fff; font-size: 10.390px; line-height: 18px; padding-top: 1px; text-align: center; }
</style>
